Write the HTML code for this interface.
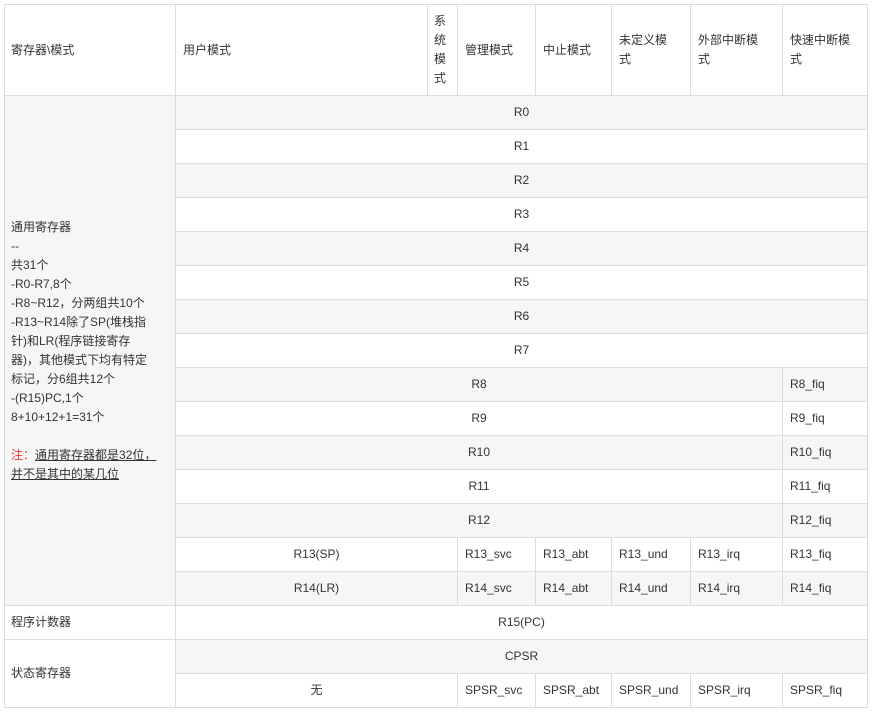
<!DOCTYPE html>
<html><head><meta charset="utf-8"><style>
body{margin:0;background:#fff;width:873px;height:714px;position:relative;overflow:hidden;font-family:"Liberation Sans","Noto Sans CJK SC",sans-serif;font-size:12px;color:#333}
.c{position:absolute;box-sizing:border-box;border:1px solid #ddd;display:flex;align-items:center;padding:0 7px;line-height:19px;white-space:nowrap}
.m{justify-content:center}
.g{background:#f6f6f6}
</style></head><body>
<div class="c" style="left:4px;top:4px;width:172px;height:92px;padding-left:6px">寄存器\模式</div>
<div class="c" style="left:175px;top:4px;width:253px;height:92px">用户模式</div>
<div class="c" style="left:427px;top:4px;width:31px;height:92px;padding:0 6px;line-height:19px"><div>系<br>统<br>模<br>式</div></div>
<div class="c" style="left:457px;top:4px;width:79px;height:92px">管理模式</div>
<div class="c" style="left:535px;top:4px;width:77px;height:92px">中止模式</div>
<div class="c" style="left:611px;top:4px;width:80px;height:92px"><div>未定义模<br>式</div></div>
<div class="c" style="left:690px;top:4px;width:93px;height:92px"><div>外部中断模<br>式</div></div>
<div class="c" style="left:782px;top:4px;width:86px;height:92px"><div>快速中断模<br>式</div></div>

<div class="c g" style="left:4px;top:95px;width:172px;height:511px;padding-left:6px"><div>通用寄存器<br>--<br>共31个<br>-R0-R7,8个<br>-R8~R12，分两组共10个<br>-R13~R14除了SP(堆栈指<br>针)和LR(程序链接寄存<br>器)，其他模式下均有特定<br>标记，分6组共12个<br>-(R15)PC,1个<br>8+10+12+1=31个<br><br><span style="color:#e33">注：</span><u>通用寄存器都是32位，</u><br><u>并不是其中的某几位</u></div></div>

<div class="c m g" style="left:175px;top:95px;width:693px;height:35px">R0</div>
<div class="c m" style="left:175px;top:129px;width:693px;height:35px">R1</div>
<div class="c m g" style="left:175px;top:163px;width:693px;height:35px">R2</div>
<div class="c m" style="left:175px;top:197px;width:693px;height:35px">R3</div>
<div class="c m g" style="left:175px;top:231px;width:693px;height:35px">R4</div>
<div class="c m" style="left:175px;top:265px;width:693px;height:35px">R5</div>
<div class="c m g" style="left:175px;top:299px;width:693px;height:35px">R6</div>
<div class="c m" style="left:175px;top:333px;width:693px;height:35px">R7</div>

<div class="c m g" style="left:175px;top:367px;width:608px;height:35px">R8</div>
<div class="c g" style="left:782px;top:367px;width:86px;height:35px">R8_fiq</div>
<div class="c m" style="left:175px;top:401px;width:608px;height:35px">R9</div>
<div class="c" style="left:782px;top:401px;width:86px;height:35px">R9_fiq</div>
<div class="c m g" style="left:175px;top:435px;width:608px;height:35px">R10</div>
<div class="c g" style="left:782px;top:435px;width:86px;height:35px">R10_fiq</div>
<div class="c m" style="left:175px;top:469px;width:608px;height:35px">R11</div>
<div class="c" style="left:782px;top:469px;width:86px;height:35px">R11_fiq</div>
<div class="c m g" style="left:175px;top:503px;width:608px;height:35px">R12</div>
<div class="c g" style="left:782px;top:503px;width:86px;height:35px">R12_fiq</div>

<div class="c m" style="left:175px;top:537px;width:283px;height:35px">R13(SP)</div>
<div class="c" style="left:457px;top:537px;width:79px;height:35px">R13_svc</div>
<div class="c" style="left:535px;top:537px;width:77px;height:35px">R13_abt</div>
<div class="c" style="left:611px;top:537px;width:80px;height:35px">R13_und</div>
<div class="c" style="left:690px;top:537px;width:93px;height:35px">R13_irq</div>
<div class="c" style="left:782px;top:537px;width:86px;height:35px">R13_fiq</div>

<div class="c m g" style="left:175px;top:571px;width:283px;height:35px">R14(LR)</div>
<div class="c g" style="left:457px;top:571px;width:79px;height:35px">R14_svc</div>
<div class="c g" style="left:535px;top:571px;width:77px;height:35px">R14_abt</div>
<div class="c g" style="left:611px;top:571px;width:80px;height:35px">R14_und</div>
<div class="c g" style="left:690px;top:571px;width:93px;height:35px">R14_irq</div>
<div class="c g" style="left:782px;top:571px;width:86px;height:35px">R14_fiq</div>

<div class="c" style="left:4px;top:605px;width:172px;height:35px;padding-left:6px">程序计数器</div>
<div class="c m" style="left:175px;top:605px;width:693px;height:35px">R15(PC)</div>

<div class="c" style="left:4px;top:639px;width:172px;height:69px;padding-left:6px">状态寄存器</div>
<div class="c m g" style="left:175px;top:639px;width:693px;height:35px">CPSR</div>
<div class="c m" style="left:175px;top:673px;width:283px;height:35px">无</div>
<div class="c" style="left:457px;top:673px;width:79px;height:35px">SPSR_svc</div>
<div class="c" style="left:535px;top:673px;width:77px;height:35px">SPSR_abt</div>
<div class="c" style="left:611px;top:673px;width:80px;height:35px">SPSR_und</div>
<div class="c" style="left:690px;top:673px;width:93px;height:35px">SPSR_irq</div>
<div class="c" style="left:782px;top:673px;width:86px;height:35px">SPSR_fiq</div>
</body></html>
